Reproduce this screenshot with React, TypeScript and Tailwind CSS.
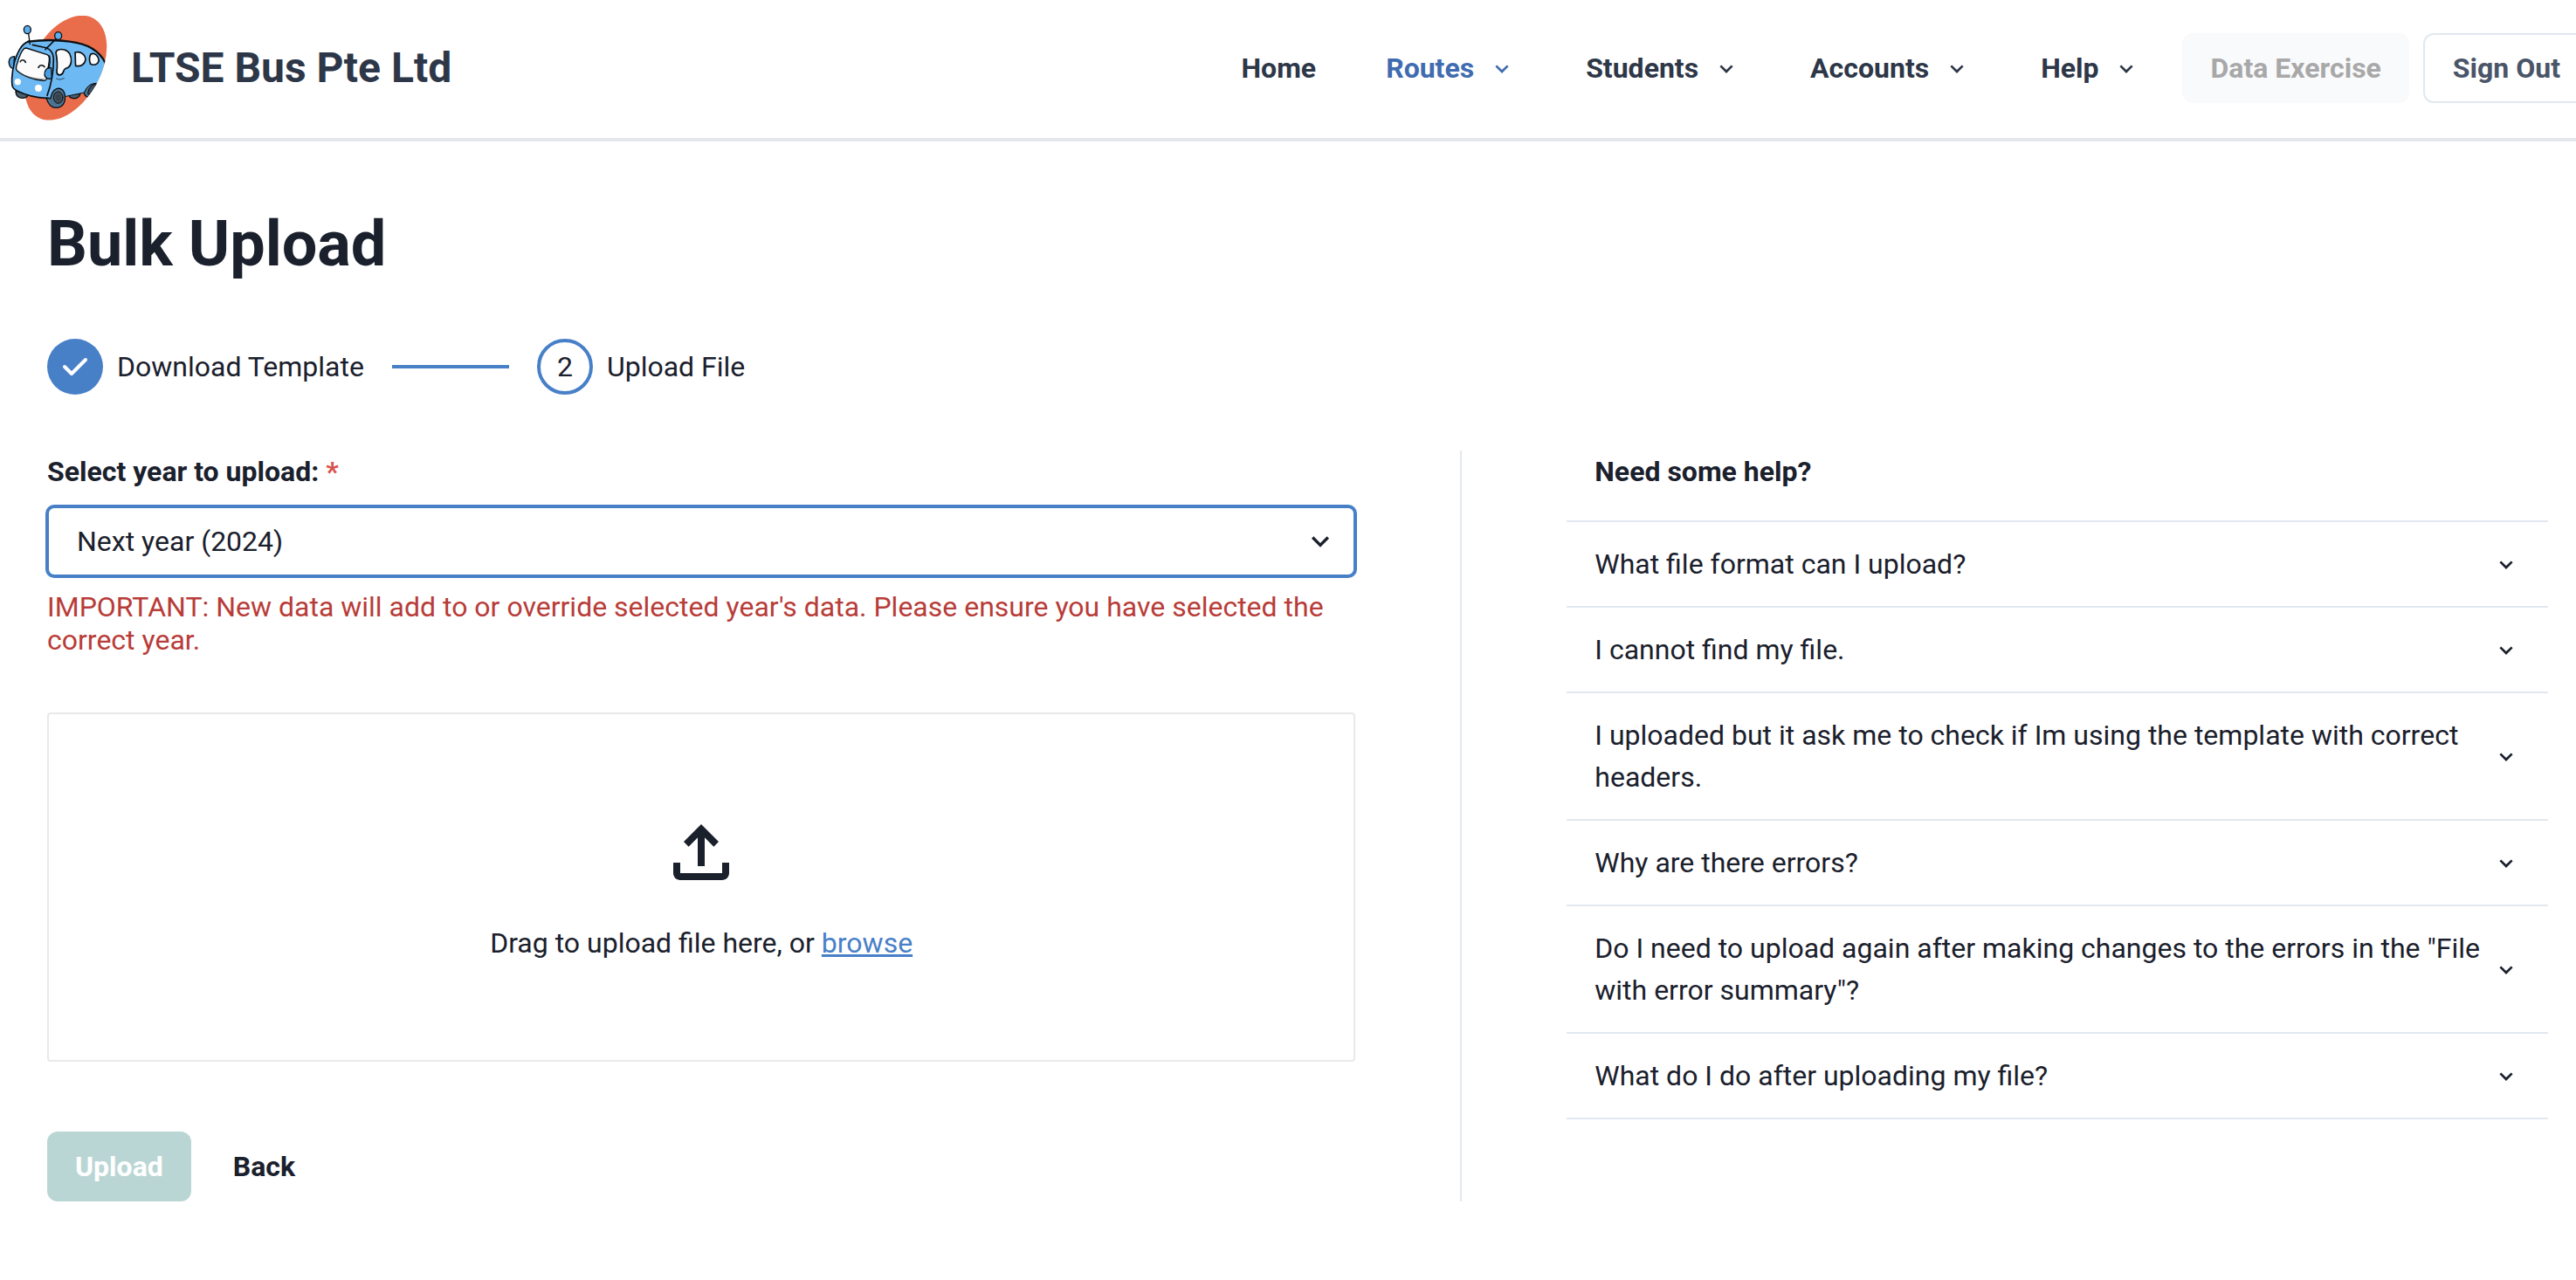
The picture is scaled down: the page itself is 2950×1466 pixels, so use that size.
import React from "react";
import { BiChevronDown } from "react-icons/bi";
import { MdOutlineFileUpload } from "react-icons/md";

const menus = [
  { label: "Routes", active: true },
  { label: "Students", active: false },
  { label: "Accounts", active: false },
  { label: "Help", active: false },
];

const questions = [
  "What file format can I upload?",
  "I cannot find my file.",
  "I uploaded but it ask me to check if Im using the template with correct headers.",
  "Why are there errors?",
  'Do I need to upload again after making changes to the errors in the "File with error summary"?',
  "What do I do after uploading my file?",
];

function BusLogo() {
  return (
    <svg viewBox="12 54 360 360" className="size-[120px] shrink-0" role="img" aria-label="LTSE Bus logo">
      <defs>
        <clipPath id="bus-egg">
          <path d="M0 0H270V480H0Z" />
          <ellipse cx="226" cy="233" rx="119" ry="195" transform="rotate(29.2 226 233)" />
        </clipPath>
      </defs>
      <ellipse cx="226" cy="233" rx="119" ry="195" transform="rotate(29.2 226 233)" fill="#e96d4b" />
      <g clipPath="url(#bus-egg)" stroke="#0c0f12" strokeWidth="4" strokeLinecap="round" strokeLinejoin="round">
        <path d="M54 312C54 332 66 338 80 337C90 336 96 331 97 322Z" fill="#4a5f70" />
        <path d="M236 326C240 342 270 344 276 322Z" fill="#4a5f70" />
        <path d="M288 318C294 338 312 340 330 320L332 284C312 282 296 296 288 318Z" fill="#4c7391" />
        <path d="M302 322C304 300 314 290 330 288V330Z" fill="#3d4b58" strokeWidth="3" />
        <path
          d="M100 142C160 136 200 137 240 143C300 150 340 172 364 216L372 280L328 286C308 288 296 300 290 318L222 332L170 337C140 340 90 326 58 312C42 304 40 296 41 268C43 240 50 200 66 172C76 154 84 146 100 142Z"
          fill="#6db9f3"
          stroke="none"
        />
        <path d="M290 318L222 332M328 286C308 288 296 300 290 318" fill="none" strokeWidth="3" />
        <path
          d="M162 338C130 336 86 326 58 312C42 304 40 296 41 268C43 240 50 200 66 172C76 154 84 146 100 142"
          fill="none"
          strokeWidth="5"
        />
        <path d="M96 143C160 135 200 137 240 143C300 150 340 172 362 216" fill="none" strokeWidth="7" />
        <path d="M50 194C32 194 28 210 32 222C34 230 40 236 46 234Z" fill="#4b9fe0" />
        <path
          d="M90 165L162 188C170 192 170 198 169 208L160 270C159 277 152 278 144 276C116 274 80 262 58 242C52 236 56 226 60 216C66 194 74 176 84 166Z"
          fill="#fbfbfb"
        />
        <path d="M66 248C90 264 120 271 152 272" fill="none" stroke="#59626a" strokeWidth="2" />
        <path d="M112 154L148 162C170 164 184 180 184 204C184 246 174 296 162 328" fill="none" strokeWidth="5" />
        <path d="M176 233C160 230 152 244 153 258C156 270 168 274 178 268Z" fill="#4b9fe0" />
        <path d="M170 192C173 206 172 220 168 234" fill="none" />
        <path d="M70 212C72 204 84 204 88 214M132 232C136 222 148 222 153 230" fill="none" strokeWidth="5" />
      </g>
      <g fill="#fbfbfb" stroke="#0c0f12" strokeWidth="5" strokeLinejoin="round">
        <path d="M196 173C212 166 232 170 240 186C248 204 246 224 234 232C220 236 220 240 217 248C212 262 196 260 195 248C198 224 196 200 192 180Z" />
        <path d="M258 180C274 176 292 184 294 204C292 222 276 230 260 226C258 210 260 196 258 180Z" />
        <path d="M312 186C326 180 338 192 340 208C336 222 324 226 311 220C306 208 306 196 312 186Z" />
      </g>
      <path d="M194 270C202 275 212 273 220 269" fill="none" stroke="#3c6486" strokeWidth="4" strokeLinecap="round" />
      <g stroke="#0c0f12" strokeWidth="4" strokeLinecap="round">
        <path d="M98 116L103 152" />
        <path d="M192 134L156 170" strokeWidth="5" />
        <ellipse cx="94" cy="102" rx="12" ry="14" fill="#5aaeee" />
        <ellipse cx="200" cy="123" rx="12" ry="13" fill="#5aaeee" />
        <path d="M160 336C164 360 180 372 196 370C216 368 226 350 223 328C220 306 204 300 192 306C182 312 176 324 174 338Z" fill="#4c7391" />
        <ellipse cx="200" cy="335" rx="16" ry="20" fill="#3b4650" strokeWidth="3" />
        <ellipse cx="200" cy="335" rx="12" ry="15" fill="#37444f" stroke="#7c8892" strokeWidth="1" />
      </g>
      <circle cx="61" cy="281" r="11" fill="#fff" />
      <circle cx="132" cy="303" r="12" fill="#fff" />
    </svg>
  );
}

function Header() {
  return (
    <header className="flex items-center justify-between overflow-hidden border-b-4 border-[#e4e8ec] pt-[18px] pb-5 pl-1">
      <div className="flex items-center gap-[26px]">
        <BusLogo />
        <span className="text-5xl font-bold whitespace-nowrap text-[#2d3748]">LTSE Bus Pte Ltd</span>
      </div>
      <div className="-mr-4 flex shrink-0 items-center gap-4">
        <nav className="flex items-center gap-4 font-bold text-[#2d3748]">
          <a href="#home" className="px-8">
            Home
          </a>
          {menus.map((menu) => (
            <button
              key={menu.label}
              type="button"
              className={
                menu.active
                  ? "flex items-center gap-4 px-8 text-[#3f6cb0]"
                  : "flex items-center gap-4 px-8"
              }
            >
              {menu.label}
              <BiChevronDown className="size-8" />
            </button>
          ))}
        </nav>
        <button type="button" disabled className="h-20 rounded-xl bg-[#f9fafc] px-8 font-bold text-[#a8a8a8]">
          Data Exercise
        </button>
        <button type="button" className="h-20 rounded-xl border-2 border-[#e2e8f0] px-8 font-bold text-[#4a5568]">
          Sign Out
        </button>
      </div>
    </header>
  );
}

function Steps() {
  return (
    <ol className="flex items-center gap-8">
      <li className="flex items-center gap-4">
        <span className="flex size-16 items-center justify-center rounded-full bg-[#4880c8]">
          <svg viewBox="0 0 32 32" className="size-8" fill="none" stroke="#fff" strokeWidth="4" strokeLinecap="round" strokeLinejoin="round" aria-hidden="true">
            <path d="M4 16L12 24L28 8" />
          </svg>
        </span>
        Download Template
      </li>
      <li aria-hidden="true" className="h-1 w-[134px] bg-[#4880c8]" />
      <li className="flex items-center gap-4">
        <span className="flex size-16 items-center justify-center rounded-full border-4 border-[#4880c8]">2</span>
        Upload File
      </li>
    </ol>
  );
}

function UploadForm() {
  return (
    <form className="flex flex-col" onSubmit={(event) => event.preventDefault()}>
      <label htmlFor="year" className="font-bold">
        Select year to upload: <span className="text-[#d9534f]">*</span>
      </label>
      <div className="relative mt-4">
        <select
          id="year"
          required
          defaultValue="next"
          className="block h-20 w-full appearance-none rounded-lg border-2 border-[#4880c8] bg-white pr-20 pl-8 outline-none ring-2 ring-[#4880c8]"
        >
          <option value="current">Current year (2023)</option>
          <option value="next">Next year (2024)</option>
        </select>
        <span className="pointer-events-none absolute inset-y-0 right-4 flex w-12 items-center justify-center">
          <svg viewBox="0 0 24 24" className="size-10" fill="currentColor" aria-hidden="true">
            <path d="M16.59 8.59L12 13.17 7.41 8.59 6 10l6 6 6-6z" />
          </svg>
        </span>
      </div>
      <p className="mt-4 leading-[38px] text-[#b83c38]">
        IMPORTANT: New data will add to or override selected year's data. Please ensure you have selected the correct
        year.
      </p>
      <div className="mt-16 flex h-[400px] flex-col items-center justify-center gap-8 rounded border-2 border-[#e9e9e9]">
        <MdOutlineFileUpload className="size-24" />
        <p>
          Drag to upload file here, or{" "}
          <a href="#browse" className="text-[#4880c8] underline">
            browse
          </a>
        </p>
      </div>
      <div className="mt-20 flex gap-4">
        <button type="submit" disabled className="h-20 rounded-xl bg-[#bad6d4] px-8 font-bold text-white">
          Upload
        </button>
        <button type="button" className="h-20 rounded-xl px-8 font-bold">
          Back
        </button>
      </div>
    </form>
  );
}

function Help() {
  return (
    <section>
      <h2 className="px-8 pb-8 font-bold">Need some help?</h2>
      <ul className="border-b-2 border-[#e2e8f0]">
        {questions.map((question) => (
          <li key={question} className="border-t-2 border-[#e2e8f0]">
            <button type="button" className="flex w-full items-center justify-between px-8 py-6 text-left">
              {question}
              <BiChevronDown className="size-8 shrink-0" />
            </button>
          </li>
        ))}
      </ul>
    </section>
  );
}

export default function App() {
  return (
    <div className="min-h-screen bg-white font-['Roboto',sans-serif] text-[32px] leading-[48px] text-[#1a202c]">
      <Header />
      <main className="pt-[74px] pr-8 pb-20 pl-[54px]">
        <h1 className="text-7xl leading-[88px] font-bold">Bulk Upload</h1>
        <div className="mt-16">
          <Steps />
        </div>
        <div className="mt-16 grid grid-cols-[4fr_2px_3fr] gap-x-[120px]">
          <UploadForm />
          <div className="bg-[#e2e8f0]" />
          <Help />
        </div>
      </main>
    </div>
  );
}
